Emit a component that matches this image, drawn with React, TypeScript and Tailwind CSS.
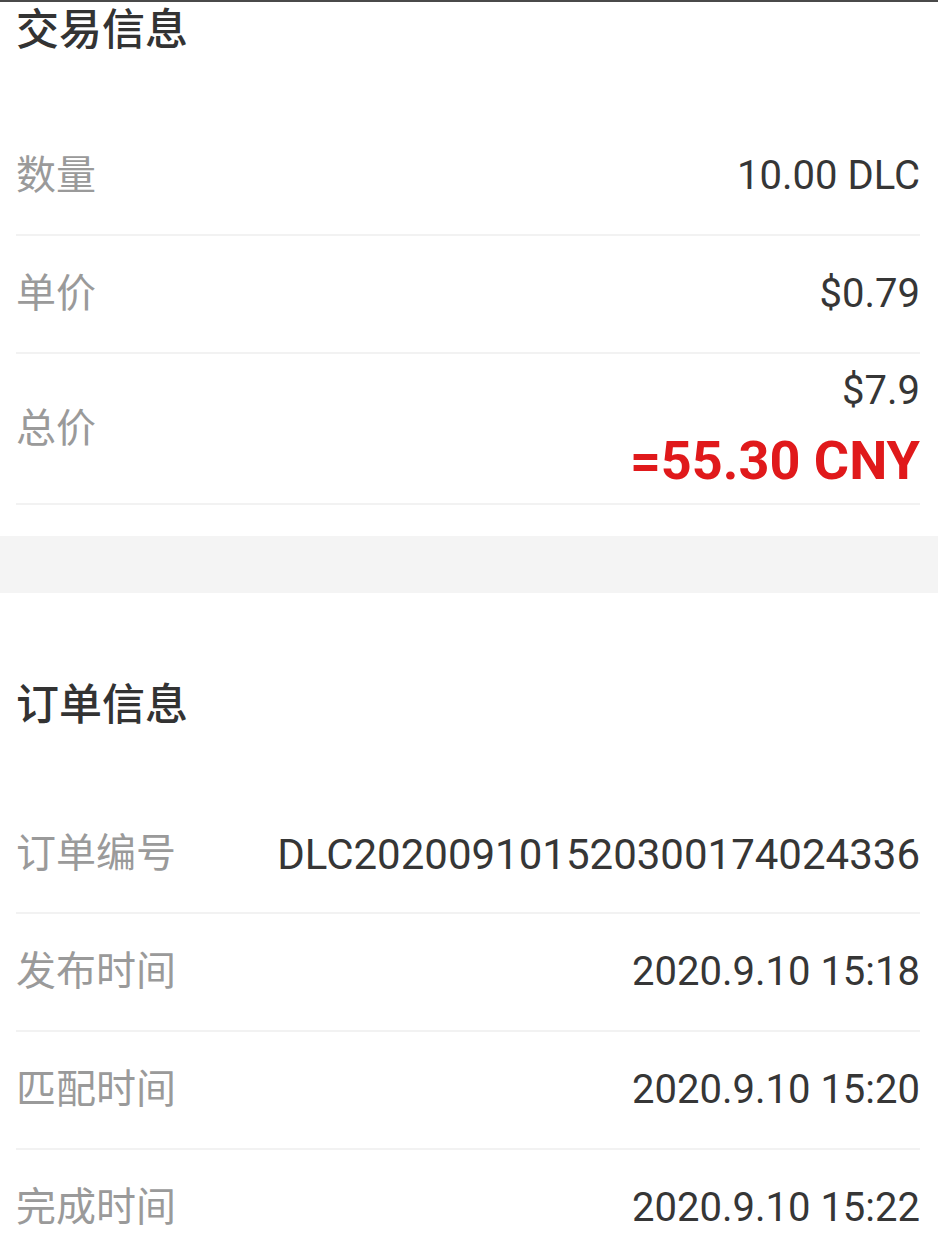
const rowsTrade = [
  { label: "数量", value: "10.00 DLC" },
  { label: "单价", value: "$0.79" },
];

const rowsOrder = [
  { label: "订单编号", value: "DLC202009101520300174024336", big: true },
  { label: "发布时间", value: "2020.9.10 15:18" },
  { label: "匹配时间", value: "2020.9.10 15:20" },
  { label: "完成时间", value: "2020.9.10 15:22" },
];

const Row = ({ label, value, big }: { label: string; value: string; big?: boolean }) => (
  <div className="flex h-[118px] items-center justify-between border-b-2 border-[#f2f2f2]">
    <span className="text-[40px] text-[#9a9a9a]">{label}</span>
    <span className={big ? "text-[42px] text-[#363636]" : "text-[40px] text-[#363636]"}>{value}</span>
  </div>
);

export default function App() {
  return (
    <div className="min-h-[1236px] w-[938px] overflow-hidden border-t-2 border-[#4a4a4a] bg-white font-[Roboto,'Noto_Sans_CJK_SC',sans-serif]">
      <section className="pl-4 pr-[18px]">
        <div className="h-[116px]">
          <h2 className="text-[43px] font-medium leading-[56px] text-[#333]">交易信息</h2>
        </div>
        {rowsTrade.map((r) => (
          <Row key={r.label} {...r} />
        ))}
        <div className="flex h-[151px] items-center justify-between border-b-2 border-[#f2f2f2]">
          <span className="text-[40px] text-[#9a9a9a]">总价</span>
          <div className="flex flex-col items-end">
            <span className="text-[40px] leading-[64px] text-[#363636]">$7.9</span>
            <span className="text-[54px] font-bold leading-[76px] text-[#e0191b]">=55.30 CNY</span>
          </div>
        </div>
      </section>

      <div className="mt-[31px] h-[57px] bg-[#f4f4f4]" />

      <section className="pl-4 pr-[18px] pt-[84px]">
        <div className="h-[119px]">
          <h2 className="text-[43px] font-medium leading-[56px] text-[#333]">订单信息</h2>
        </div>
        {rowsOrder.map((r) => (
          <Row key={r.label} {...r} />
        ))}
      </section>
    </div>
  );
}
